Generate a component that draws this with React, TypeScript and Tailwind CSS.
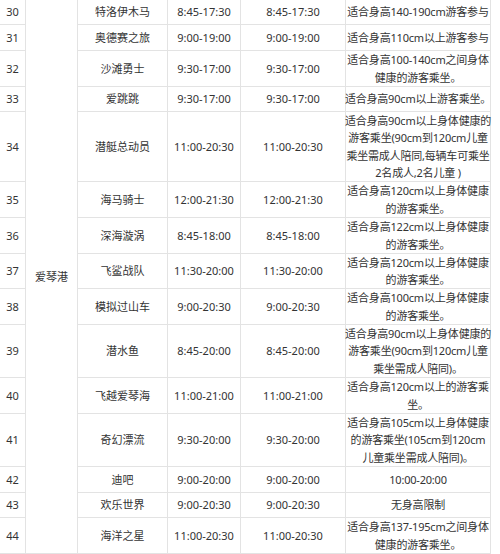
import React from 'react';

type Ride = {
  no: number;
  name: string;
  open: string;
  run: string;
  note: string[];
};

const rides: Ride[] = [
  { no: 30, name: '特洛伊木马', open: '8:45-17:30', run: '8:45-17:30', note: ['适合身高140-190cm游客参与'] },
  { no: 31, name: '奥德赛之旅', open: '9:00-19:00', run: '9:00-19:00', note: ['适合身高110cm以上游客参与'] },
  { no: 32, name: '沙滩勇士', open: '9:30-17:00', run: '9:30-17:00', note: ['适合身高100-140cm之间身体', '健康的游客乘坐。'] },
  { no: 33, name: '爱跳跳', open: '9:30-17:00', run: '9:30-17:00', note: ['适合身高90cm以上游客乘坐。'] },
  {
    no: 34,
    name: '潜艇总动员',
    open: '11:00-20:30',
    run: '11:00-20:30',
    note: ['适合身高90cm以上身体健康的', '游客乘坐(90cm到120cm儿童', '乘坐需成人陪同,每辆车可乘坐', '2名成人,2名儿童 )'],
  },
  { no: 35, name: '海马骑士', open: '12:00-21:30', run: '12:00-21:30', note: ['适合身高120cm以上身体健康', '的游客乘坐。'] },
  { no: 36, name: '深海漩涡', open: '8:45-18:00', run: '8:45-18:00', note: ['适合身高122cm以上身体健康', '的游客乘坐。'] },
  { no: 37, name: '飞鲨战队', open: '11:30-20:00', run: '11:30-20:00', note: ['适合身高120cm以上身体健康', '的游客乘坐。'] },
  { no: 38, name: '模拟过山车', open: '9:00-20:30', run: '9:00-20:30', note: ['适合身高100cm以上身体健康', '的游客乘坐。'] },
  {
    no: 39,
    name: '潜水鱼',
    open: '8:45-20:00',
    run: '8:45-20:00',
    note: ['适合身高90cm以上身体健康的', '游客乘坐(90cm到120cm儿童', '乘坐需成人陪同)。'],
  },
  { no: 40, name: '飞越爱琴海', open: '11:00-21:00', run: '11:00-21:00', note: ['适合身高120cm以上的游客乘', '坐。'] },
  {
    no: 41,
    name: '奇幻漂流',
    open: '9:30-20:00',
    run: '9:30-20:00',
    note: ['适合身高105cm以上身体健康', '的游客乘坐(105cm到120cm', '儿童乘坐需成人陪同)。'],
  },
  { no: 42, name: '迪吧', open: '9:00-20:00', run: '9:00-20:00', note: ['10:00-20:00'] },
  { no: 43, name: '欢乐世界', open: '9:00-20:30', run: '9:00-20:30', note: ['无身高限制'] },
  { no: 44, name: '海洋之星', open: '11:00-20:30', run: '11:00-20:30', note: ['适合身高137-195cm之间身体', '健康的游客乘坐。'] },
];

const cell =
  'flex items-center justify-center text-center border-r border-b border-[#e3e3e3] whitespace-nowrap';

const App: React.FC = () => {
  return (
    <div
      className="w-[500px] h-[554px] overflow-hidden bg-white text-[11px] leading-[17.5px] text-[#333]"
      style={{ fontFamily: '"Noto Sans", "Noto Sans CJK SC", sans-serif' }}
    >
      <div className="grid w-[491px] grid-cols-[26px_52px_90px_73px_105px_145px] grid-rows-[25px_26px_36px_25px_70px_36px_36px_35px_36px_53px_36px_53px_26px_25px_36px]">
        {rides.map((r, i) => (
          <React.Fragment key={r.no}>
            <div className={`${cell} col-start-1`}>{r.no}</div>
            {i === 0 && <div className={`${cell} col-start-2 row-span-15`}>爱琴港</div>}
            <div className={`${cell} col-start-3`}>{r.name}</div>
            <div className={`${cell} col-start-4`}>{r.open}</div>
            <div className={`${cell} col-start-5`}>{r.run}</div>
            <div className={`${cell} col-start-6 tracking-[-0.2px]`}>
              <div>
                {r.note.map((line) => (
                  <div key={line}>{line}</div>
                ))}
              </div>
            </div>
          </React.Fragment>
        ))}
      </div>
    </div>
  );
};

export default App;
